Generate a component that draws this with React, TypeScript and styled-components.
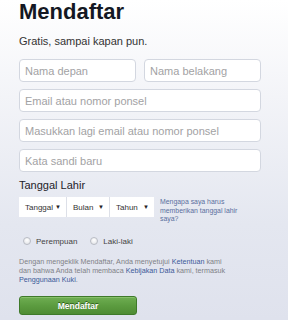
import styled, { createGlobalStyle } from "styled-components";

const GlobalStyle = createGlobalStyle`
  html, body {
    margin: 0;
    padding: 0;
  }
  body {
    font-family: "Liberation Sans", Arial, sans-serif;
  }
`;

const Page = styled.div`
  width: 288px;
  height: 320px;
  box-sizing: border-box;
  padding: 0 27px 0 19px;
  background: linear-gradient(to bottom, #ffffff 0%, #f3f4f8 30%, #e4e7f0 70%, #dfe2ed 100%);
  overflow: hidden;
`;

const Title = styled.h1`
  margin: 0;
  font-size: 22px;
  line-height: 24px;
  font-weight: bold;
  color: #141823;
`;

const Subtitle = styled.p`
  margin: 10px 0 0;
  font-size: 11px;
  line-height: 14px;
  color: #333;
`;

const Fields = styled.div`
  display: flex;
  flex-direction: column;
  gap: 7px;
  margin-top: 11px;
`;

const Row = styled.div`
  display: flex;
  gap: 8px;

  & > * {
    flex: 1;
    min-width: 0;
  }
`;

const Input = styled.input`
  display: block;
  width: 100%;
  height: 23px;
  box-sizing: border-box;
  padding: 0 5px;
  border: 1px solid #d3d7e0;
  border-radius: 4px;
  background: #fff;
  font-family: "Liberation Sans", Arial, sans-serif;
  font-size: 11px;
  color: #333;
  outline: none;

  &::placeholder {
    color: #a2a2a4;
  }
`;

const Label = styled.div`
  margin-top: 6px;
  font-size: 11px;
  line-height: 14px;
  color: #1d2129;
`;

const BirthRow = styled.div`
  display: flex;
  align-items: flex-start;
  margin-top: 5px;
`;

const Selects = styled.div`
  display: flex;
  background: #fff;
  height: 20px;
`;

const Select = styled.div<{ $w: number }>`
  width: ${(p) => p.$w}px;
  box-sizing: border-box;
  display: flex;
  align-items: center;
  justify-content: space-between;
  padding: 0 5px 0 6px;
  font-size: 8px;
  color: #333;
  border-right: 1px solid #dde0e8;

  &:last-child {
    border-right: none;
  }
`;

const Arrow = styled.span`
  font-size: 6px;
  color: #222;
`;

const Why = styled.div`
  margin: 1px 0 0 6px;
  font-size: 6.9px;
  line-height: 8.5px;
  color: #5a6f9e;
`;

const Genders = styled.div`
  display: flex;
  align-items: center;
  gap: 13px;
  margin: 13px 0 0 4px;
`;

const Gender = styled.label`
  display: flex;
  align-items: center;
  gap: 5px;
  font-size: 8px;
  color: #444;
`;

const Radio = styled.span`
  width: 8px;
  height: 8px;
  box-sizing: border-box;
  border-radius: 50%;
  border: 1px solid #b9bcc4;
  background: radial-gradient(circle at 50% 35%, #ffffff 0%, #e8e9ec 70%, #d5d7dc 100%);
`;

const Legal = styled.p`
  margin: 11px 0 0;
  font-size: 7.2px;
  line-height: 9.3px;
  color: #7f8186;
`;

const Link = styled.span`
  color: #3b5998;
`;

const Submit = styled.button`
  display: block;
  width: 118px;
  height: 19px;
  margin-top: 12px;
  padding: 0;
  border: 1px solid #3f7a2a;
  border-radius: 3px;
  background: linear-gradient(to bottom, #6fae52 0%, #5c9c40 50%, #4f8c34 100%);
  box-shadow: inset 0 1px 0 #87c06a;
  color: #fff;
  font-family: "Liberation Sans", Arial, sans-serif;
  font-size: 8.5px;
  font-weight: bold;
  text-shadow: 0 -1px 0 #2f5e1b;
`;

export default function App() {
  return (
    <Page>
      <GlobalStyle />
      <Title>Mendaftar</Title>
      <Subtitle>Gratis, sampai kapan pun.</Subtitle>
      <Fields>
        <Row>
          <Input placeholder="Nama depan" />
          <Input placeholder="Nama belakang" />
        </Row>
        <Input placeholder="Email atau nomor ponsel" />
        <Input placeholder="Masukkan lagi email atau nomor ponsel" />
        <Input placeholder="Kata sandi baru" type="password" />
      </Fields>
      <Label>Tanggal Lahir</Label>
      <BirthRow>
        <Selects>
          <Select $w={48}>
            Tanggal <Arrow>▼</Arrow>
          </Select>
          <Select $w={43}>
            Bulan <Arrow>▼</Arrow>
          </Select>
          <Select $w={44}>
            Tahun <Arrow>▼</Arrow>
          </Select>
        </Selects>
        <Why>
          Mengapa saya harus
          <br />
          memberikan tanggal lahir
          <br />
          saya?
        </Why>
      </BirthRow>
      <Genders>
        <Gender>
          <Radio />
          Perempuan
        </Gender>
        <Gender>
          <Radio />
          Laki-laki
        </Gender>
      </Genders>
      <Legal>
        Dengan mengeklik Mendaftar, Anda menyetujui <Link>Ketentuan</Link> kami
        <br />
        dan bahwa Anda telah membaca <Link>Kebijakan Data</Link> kami, termasuk
        <br />
        <Link>Penggunaan Kuki</Link>.
      </Legal>
      <Submit>Mendaftar</Submit>
    </Page>
  );
}
